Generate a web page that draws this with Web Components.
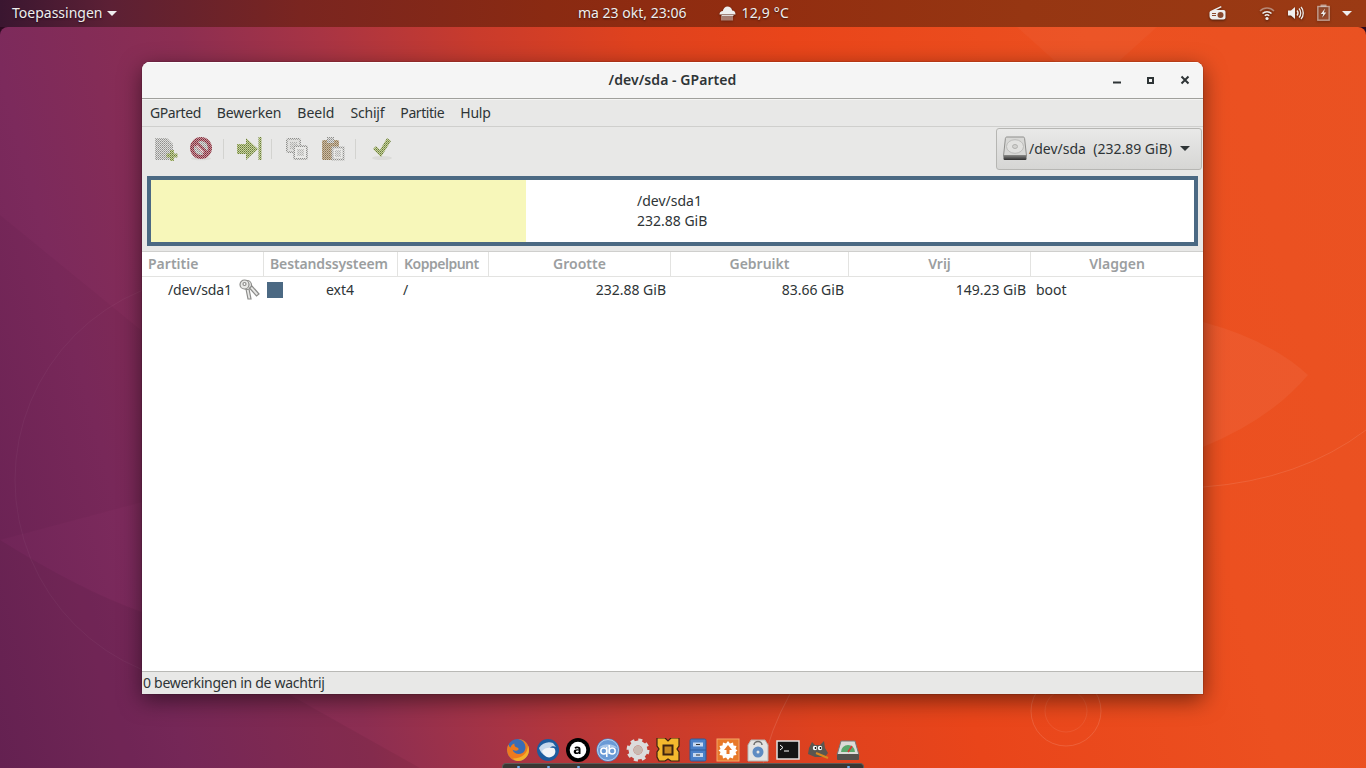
<!DOCTYPE html>
<html><head><meta charset="utf-8"><style>
html,body{margin:0;padding:0;width:1366px;height:768px;overflow:hidden;background:#000;font-family:"Noto Sans",sans-serif}
</style></head><body>
<gnome-desktop>
  <top-panel slot="panel"></top-panel>
  <gparted-window slot="window"></gparted-window>
  <app-dock slot="dock"></app-dock>
</gnome-desktop>
<script>
const F='"Noto Sans","Open Sans",sans-serif';
function def(name,html){customElements.define(name,class extends HTMLElement{constructor(){super();this.attachShadow({mode:'open'}).innerHTML=html;}})}

def('gnome-desktop',`<style>
:host{display:flex;flex-direction:column;width:1366px;height:768px;position:relative;overflow:hidden;background:#2c0a20;font-family:${F}}
.wall{flex:1;position:relative;border-radius:8px 8px 0 0;overflow:hidden;background:linear-gradient(75deg,#6a2356 0%,#7c2a5c 12%,#8c2e52 24%,#a83444 33%,#c93b2c 43%,#df421e 53%,#e9451a 63%,#ec5020 82%,#ea5222 100%);display:flex;flex-direction:column;align-items:flex-start}
.deco{position:absolute;left:0;top:0;width:1366px;height:741px;pointer-events:none}
.win{margin:35px 0 0 142px;width:1061px;height:632px;position:relative}
.dock{position:absolute;left:500px;top:711px}
</style>
<slot name="panel"></slot>
<div class="wall">
<svg class="deco" viewBox="0 27 1366 741" fill="none">
<path d="M0 215 L300 460 L0 540Z" fill="#000" opacity=".03"/>
<path d="M0 540 Q80 590 142 612 L420 768 H0Z" fill="#000" opacity=".05"/>
<path d="M1203 322 Q1270 340 1308 375 Q1270 420 1203 447Z" fill="#fff" opacity=".05"/>
<path d="M1017 27 L1087 90 L1157 27Z" fill="#fff" opacity=".03"/>
<circle cx="1066" cy="711" r="35" stroke="#fff" stroke-opacity=".13"/>
<circle cx="1066" cy="711" r="21" stroke="#fff" stroke-opacity=".08"/>
<circle cx="220" cy="480" r="205" stroke="#fff" stroke-opacity=".04"/>
<path d="M1203 487 Q1300 480 1366 430" stroke="#fff" stroke-opacity=".1"/>
<path d="M790 694 Q770 730 762 768" stroke="#fff" stroke-opacity=".12"/>
</svg>
<div class="win"><slot name="window"></slot></div>
<div class="dock"><slot name="dock"></slot></div>
</div>`);

def('top-panel',`<style>
:host{display:flex;height:27px;box-sizing:border-box;padding-bottom:2px;align-items:center;flex:none;color:#eee;font-size:14px;background:linear-gradient(90deg,#3a1630 0%,#5c2035 8%,#7a2520 22%,#8a2a12 40%,#922d10 55%,#963612 75%,#9b3a14 100%);text-shadow:0 1px 2px rgba(0,0,0,.6)}
.left{padding-left:12px;display:flex;align-items:center;gap:5px;width:566px;flex:none}
.tri{width:0;height:0;border-left:5px solid transparent;border-right:5px solid transparent;border-top:5px solid #eee;margin-top:1px}
.center{display:flex;align-items:center;gap:33px}
.wx{display:flex;align-items:center;gap:5px;letter-spacing:.2px}
.right{display:flex;align-items:center;margin-left:auto;padding-right:14px}
svg{display:block;filter:drop-shadow(0 1px 1px rgba(0,0,0,.5))}
</style>
<div class="left"><span>Toepassingen</span><span class="tri"></span></div>
<div class="center"><span>ma 23 okt, 23:06</span><span class="wx">
<svg width="17" height="17" viewBox="0 0 17 17" fill="#eee"><path d="M.5 10.500c0-2.200 1.500-3.500 3.300-3.500C4.300 4.500 6.300 2.500 8.500 2.500s4.200 1.500 4.700 4c2 0 3.300 1.500 3.300 4H.5z"/><path d="M2.500 11.500h12M3 12v4.500M5 12v4.500M7 12v4.500M9 12v4.500M11 12v4.500M13 12v4.500" stroke="#eee" stroke-width=".9" fill="none"/></svg>
<span>12,9 °C</span></span></div>
<div class="right">
<svg width="17" height="16" viewBox="0 0 17 16" style="margin-right:33px"><path d="M1.500 6 12 1l.6 1.200L7 5h7.500c1.200 0 2 .8 2 2v5.500c0 1.200-.8 2-2 2h-11c-1.500 0-3-1.500-3-3.500V8c0-1 .5-1.600 1-2z" fill="#eee"/><circle cx="11.500" cy="10" r="3" fill="#8a4a30"/><path d="M3 8.500h4M3 10.500h4" stroke="#8a4a30"/></svg>
<svg width="16" height="16" viewBox="0 0 16 16" fill="none" stroke="#eee" style="margin-right:12px"><path d="M1 6c4-4 10-4 14 0" stroke-opacity=".45" stroke-width="1.500"/><path d="M3.500 8.500c2.500-2.500 6.500-2.500 9 0" stroke-width="1.500"/><path d="M5.800 10.800c1.200-1.200 3.200-1.200 4.400 0" stroke-width="1.500"/><circle cx="8" cy="13.500" r="1.600" fill="#eee" stroke="none"/></svg>
<svg width="17" height="16" viewBox="0 0 17 16" fill="none" stroke="#eee" style="margin-right:13px"><path d="M1 5.500h3L8 2v12l-4-3.500H1z" fill="#eee" stroke="none"/><path d="M10 5.500c1.300 1.500 1.300 3.500 0 5M12 3.500c2.300 2.500 2.300 6.500 0 9M14 2c3 3 3 9 0 12" stroke-width="1.300"/></svg>
<svg width="13" height="17" viewBox="0 0 13 17" style="margin-right:12px"><rect x=".8" y="2.500" width="11.400" height="13.700" fill="#eee" fill-opacity=".12" stroke="#eee" stroke-opacity=".55" stroke-width="1.400"/><rect x="3.500" y=".5" width="6" height="2.200" fill="#eee" fill-opacity=".55"/><path d="M8 4.500 3.800 10h2.400l-1 3.800 4-5.300H6.800z" fill="#eee"/></svg>
<span class="tri"></span>
</div>`);

const pat=(id,a,b,c)=>`<pattern id="${id}" width="2" height="2" patternUnits="userSpaceOnUse"><rect width="2" height="2" fill="${a}"/><rect width="1" height="1" fill="${b}"/><rect x="1" y="1" width="1" height="1" fill="${c}"/></pattern>`;
def('gparted-window',`<style>
:host{display:flex;flex-direction:column;width:1061px;height:632px;background:#fff;border-radius:8px 8px 0 0;box-shadow:0 6px 22px rgba(0,0,0,.5),0 0 0 1px rgba(0,0,0,.1);color:#2e3436;font-size:14px;overflow:hidden}
.title{height:37px;box-sizing:border-box;padding-bottom:2px;flex:none;background:#f5f5f5;display:flex;align-items:center;justify-content:center;font-weight:600;letter-spacing:.06px;color:#2e3436;border-bottom:1px solid #a0a09c;box-shadow:inset 0 1px 0 #fff;position:relative}
.wc{position:absolute;right:0;top:0;height:36px}
.wc svg{display:block}
.menu{height:28px;box-sizing:border-box;padding:0 0 1px 8px;flex:none;background:#e8e8e7;display:flex;align-items:center;border-bottom:1px solid #cfcfcd;gap:16px;box-shadow:inset 0 1px 0 #f4f4f3}
.tools{height:44px;flex:none;background:#e8e8e7;display:flex;align-items:center;padding:0 1px 0 6px}
.spacer{flex:1}
.sep{width:1px;height:20px;background:#d3d3d0;margin:0 7px 0 5px}
.tb{width:35px;height:28px;display:flex;align-items:center;justify-content:center}
.tb svg{display:block}
.combo{width:206px;height:42px;box-sizing:border-box;border:1px solid #b6b6b3;border-radius:3px;background:linear-gradient(#e9e9e8,#d6d6d4);display:flex;align-items:center;padding:0 0 2px 5px;gap:1px}
.combo .t{flex:1;white-space:pre}
.combo .tri{width:0;height:0;border-left:5px solid transparent;border-right:5px solid transparent;border-top:5px solid #2e3436;margin-right:11px}
.graph{height:80px;flex:none;background:#e8e8e7;padding:5px;box-sizing:border-box}
.outer{height:70px;box-sizing:border-box;border:4px solid #4b6983;background:#fff;display:flex}
.yellow{width:375px;background:#f7f7ba}
.glabel{padding:11px 0 0 111px;line-height:20px}
list-view{flex:1;min-height:0}
.status{height:23px;box-sizing:border-box;padding:0 0 2px 1px;letter-spacing:-.28px;flex:none;background:#e8e8e7;border-top:1px solid #b9b9b6;display:flex;align-items:center}
</style>
<div class="title">/dev/sda - GParted
<div class="wc">
<svg width="96" height="36" viewBox="0 0 96 36" fill="none" stroke="#2e3436" stroke-width="2"><path d="M6 20.500h8"/><rect x="41" y="16" width="5" height="5"/><path d="M74.500 14.500l7 7M81.500 14.500l-7 7"/></svg>
</div></div>
<div class="menu"><span style="letter-spacing:-.43px">GParted</span><span style="letter-spacing:-.12px">Bewerken</span><span>Beeld</span><span style="letter-spacing:-.2px">Schijf</span><span style="letter-spacing:-.43px">Partitie</span><span style="letter-spacing:-.25px">Hulp</span></div>
<div class="tools">
<span class="tb"><svg width="24" height="24" viewBox="0 0 24 24"><defs>${pat('d','#dfdfdd','#8e8e8c','#a8a8a6')}${pat('g','#c9d2a0','#667a3c','#8c9e5a')}${pat('r','#c49aa0','#7d2634','#993c4a')}${pat('b','#cbbda6','#8a7352','#a28a68')}</defs><path d="M1 1h12l6 6v16H1z" fill="url(#d)"/><path d="M16 13h4v3.500h3.500v4H20V24h-4v-3.500h-3.500v-4H16z" fill="url(#g)"/></svg></span>
<span class="tb"><svg width="24" height="24" viewBox="0 0 24 24"><ellipse cx="12" cy="21.500" rx="10" ry="1.800" fill="#dbdbd9"/><circle cx="12" cy="11" r="9" fill="url(#d)" stroke="url(#r)" stroke-width="4"/><path d="M5.500 5l13 12.500" stroke="url(#r)" stroke-width="5"/><path d="M7.500 8.500l7 7" stroke="#f0e8e8" stroke-width="1.200"/></svg></span>
<span class="sep"></span>
<span class="tb"><svg width="26" height="24" viewBox="0 0 26 24"><path d="M1 7h9V1l12 11-12 11v-6H1z" fill="url(#g)"/><rect x="22.500" y="0" width="3" height="23" fill="url(#g)"/></svg></span>
<span class="sep"></span>
<span class="tb"><svg width="22" height="22" viewBox="0 0 22 22"><rect x="1" y="1" width="13" height="13" rx="1.500" fill="#dfdfdd" stroke="url(#d)" stroke-width="2"/><rect x="4" y="4" width="7" height="7" fill="url(#d)" opacity=".6"/><rect x="8" y="8" width="13" height="13" rx="1.500" fill="#e9e9e7" stroke="url(#d)" stroke-width="2"/><rect x="11" y="11" width="7" height="7" fill="url(#d)" opacity=".6"/></svg></span>
<span class="tb" style="padding-left:3px;box-sizing:border-box"><svg width="24" height="24" viewBox="0 0 24 24"><rect x="1" y="3" width="17" height="20" rx="1.500" fill="url(#b)"/><rect x="6" y="0" width="7" height="6" fill="url(#d)"/><rect x="11.500" y="10.500" width="11" height="12" fill="#e9e9e7" stroke="url(#d)" stroke-width="2"/><rect x="14" y="13" width="6" height="7" fill="url(#d)" opacity=".6"/></svg></span>
<span class="sep" style="margin-left:6px;margin-right:8px"></span>
<span class="tb"><svg width="24" height="24" viewBox="0 0 24 24"><ellipse cx="12" cy="21" rx="10" ry="2" fill="#dbdbd9"/><path d="M3 12l3-3 4 4L17 1l4 3-10 16z" fill="url(#g)"/></svg></span>
<span class="spacer"></span>
<div class="combo"><svg width="26" height="26" viewBox="0 0 26 26"><defs><linearGradient id="hd" x1="0" y1="0" x2="0" y2="1"><stop offset="0" stop-color="#8a8a88"/><stop offset="1" stop-color="#2e2e2e"/></linearGradient></defs><path d="M5 2h16c1 0 1.500.5 1.600 1.500L24.500 21H1.500L3.400 3.500C3.500 2.500 4 2 5 2z" fill="#d8d8d6" stroke="#8f8f8d"/><rect x="1.500" y="20" width="23" height="5" rx="1.200" fill="url(#hd)"/><ellipse cx="13" cy="11.500" rx="8.500" ry="6.800" fill="#e2e2e0" stroke="#bcbcba"/><ellipse cx="13" cy="11.500" rx="2.500" ry="2" fill="#d2d2d0" stroke="#b0b0ae"/></svg><span class="t">/dev/sda  (232.89 GiB)</span><span class="tri"></span></div>
</div>
<div class="graph"><div class="outer"><div class="yellow"></div><div class="glabel">/dev/sda1<br>232.88 GiB</div></div></div>
<list-view></list-view>
<div class="status">0 bewerkingen in de wachtrij</div>`);

def('list-view',`<style>
:host{display:block;background:#fff;border-top:1px solid #cfcfcd}
.row{display:grid;grid-template-columns:122px 134px 91px 182px 178px 182px 1fr;width:100%}
.head{height:25px;box-sizing:border-box;border-bottom:1px solid #e3e3e1;color:#9b9e9f;font-weight:600}
.head span{display:flex;align-items:center;padding:0 0 2px 6px;border-right:1px solid #e3e3e1;box-sizing:border-box}
.head .c{justify-content:center;padding:0 0 2px}
.head span:last-child{border-right:0}
.body{height:27px;align-items:center}
.body>span{box-sizing:border-box;display:flex;align-items:center;height:27px;padding-bottom:2px}
.r{justify-content:flex-end;padding-right:5px}
svg{display:block}
</style>
<div class="row head"><span>Partitie</span><span style="letter-spacing:-.13px">Bestandssysteem</span><span style="letter-spacing:-.5px">Koppelpunt</span><span class="c">Grootte</span><span class="c">Gebruikt</span><span class="c">Vrij</span><span class="c">Vlaggen</span></div>
<div class="row body">
<span style="padding-left:26px;gap:6px;letter-spacing:-.1px">/dev/sda1<svg width="22" height="21" viewBox="0 0 22 21" fill="#e8e8e6" stroke="#8c8c8a" stroke-width="1.200"><path d="M8 10l2 10h3l-2-10z"/><circle cx="9" cy="6" r="4.500" fill="#e8e8e6"/><path d="M11.500 9l7 8 2.500-2-7-8z"/><circle cx="6.500" cy="5.500" r="4.500"/><circle cx="6.500" cy="5" r="1.500" fill="#fff"/></svg></span>
<span style="padding-left:3px"><i style="width:16px;height:16px;background:#4b6983;display:block"></i><span style="margin-left:43px">ext4</span></span>
<span style="padding-left:5px">/</span>
<span class="r">232.88 GiB</span><span class="r">83.66 GiB</span><span class="r">149.23 GiB</span>
<span style="padding-left:5px">boot</span>
</div>`);

const ic=(s)=>`<svg width="24" height="24" viewBox="0 0 24 24">${s}</svg>`;
def('app-dock',`<style>
:host{display:block;width:366px;height:30px;position:relative}
.icons{display:flex;gap:6px;padding-left:6px}
.icons svg{display:block}
.bar{position:absolute;left:2px;top:25px;width:362px;height:8px;background:#3a3633;border:1px solid #5e5a56;border-bottom:0;border-radius:4px 4px 0 0;box-sizing:border-box;display:flex}
.dot{position:absolute;top:2px;width:3px;height:2px;background:#6fb0ee;border-radius:1px}
</style>
<div class="icons">
${ic('<circle cx="12" cy="12" r="11" fill="#3a6db5"/><path d="M12 1c7 0 11 5.500 11 11s-5 11-11 11S1 18 1 12c0-2 .5-4 1.500-5.500C3 8 3.500 9 4.500 9.500 5 7 7 6 8.500 5.500 8 7.500 9 9 11 9.500c2 .5 2 2.500 0 3-2 .5-3.500 0-4.500-1 1 4 6 6 10 3.500s3.500-8 1-11C16 2 14 1.500 12 1z" fill="#ee7a1e"/><path d="M12 23c6 0 11-5 11-11 0-2-.5-3.500-1-4.500-.5 8-6 13-15 13 1 1.500 3 2.500 5 2.500z" fill="#f4b02c"/>')}
${ic('<circle cx="12" cy="12" r="11" fill="#1d5c9e"/><path d="M3 10c3-5 9-7 14-5l3 4c-2-1-5-1-6 1-1 1.500 0 3 2 3.500-3 1-5 0-6-2 0 3 2 5 5 5.500-4 2-9 1-12-7z" fill="#c5d8ec"/><path d="M6 13c2-3 6-4 12-3 2 2 2 6-1 8-4 3-9 1-11-5z" fill="#f2f4f7"/>')}
${ic('<circle cx="12" cy="12" r="12" fill="#000"/><circle cx="12" cy="12" r="8.300" fill="#fff"/><path d="M8.500 9.500c1.500-1.500 6-1.500 6 1.500v5h-1.800v-.8c-1.500 1.400-5 1.200-5-1.400 0-2.400 3-2.800 5-2.300 0-1.500-2-1.500-3.500-.7zM10 13.700c0 1.200 2.300 1 2.700-.2v-.8c-1.200-.3-2.700 0-2.700 1z" fill="#000"/>')}
${ic('<circle cx="12" cy="12" r="11.500" fill="#4f84c8"/><circle cx="12" cy="12" r="10.500" fill="#6a9ad6" stroke="#b8d0ee"/><path d="M3 10c3-5 15-5 18 0-4-1.500-14-1.500-18 0z" fill="#a8c6ea"/><circle cx="7.800" cy="13" r="3" fill="none" stroke="#fff" stroke-width="1.500"/><path d="M10.800 9v10M13.200 7v9" stroke="#fff" stroke-width="1.500"/><circle cx="16.200" cy="13" r="3" fill="none" stroke="#fff" stroke-width="1.500"/>')}
${ic('<circle cx="12" cy="12" r="7" fill="none" stroke="#dcdcdc" stroke-width="5"/><circle cx="12" cy="12" r="10" fill="none" stroke="#dcdcdc" stroke-width="3" stroke-dasharray="4 3.850"/><circle cx="12" cy="12" r="4.500" fill="#c9b8b0"/>')}
${ic('<path d="M1 0h8l3 3 3-3h8v8l-2 3 2 3v9h-8l-3-2-3 2H3l-2-4v-5l2-3-2-3z" fill="#f4b92e" stroke="#3e2410" stroke-width="1.200"/><rect x="7.500" y="7.500" width="9" height="9" fill="#c98a20" stroke="#3e2410" stroke-width="2"/>')}
${ic('<rect x="4" y="1" width="16" height="22" rx="1.500" fill="#4a80c8" stroke="#2d5a9a"/><path d="M4 12h16" stroke="#2d5a9a"/><rect x="7" y="4.500" width="10" height="4" fill="#c6d8f0"/><rect x="7" y="15" width="10" height="4" fill="#c6d8f0"/><path d="M10 6.500h4M10 17h4" stroke="#333"/>')}
${ic('<rect x="1" y="1" width="22" height="22" fill="#e8792a" stroke="#f4a868"/><path d="M12 3l2 2.500 3-1 .5 3 3 .5-1 3 2 1.500-2 1.500 1 3-3 .5-.5 3-3-1-2 2.500-2-2.500-3 1-.5-3-3-.5 1-3-2-1.500 2-1.500-1-3 3-.5.5-3 3 1z" fill="#fff"/><path d="M12 7l4 5h-2.500v4h-3v-4H8z" fill="#e8792a"/>')}
${ic('<path d="M5 2h14l3 5v16H2V7z" fill="#e4e4e2" stroke="#b5b5b3"/><path d="M8 7a4 3.500 0 0 1 8 0" fill="none" stroke="#6e6e6c" stroke-width="1.500"/><circle cx="12" cy="14" r="5.500" fill="#5f8cc2"/><circle cx="12" cy="14" r="1.500" fill="#e4e4e2"/>')}
${ic('<rect x="1" y="3" width="22" height="18" fill="#141414" stroke="#e2e2e2" stroke-width="1.500"/><path d="M4 7l3 2.500L4 12" stroke="#fff" fill="none"/><path d="M8 13h5" stroke="#fff"/>')}
${ic('<path d="M3 10l3-6 3 3h5l4-4 1 7 3 5-3 4H9l-7-3z" fill="#5a5650"/><circle cx="9" cy="10" r="2.200" fill="#fff"/><circle cx="14" cy="10" r="2.200" fill="#fff"/><circle cx="9.500" cy="10" r=".9" fill="#000"/><circle cx="14.500" cy="10" r=".9" fill="#000"/><path d="M10 15l12 5" stroke="#d98a20" stroke-width="2"/>')}
${ic('<path d="M5 3h14l4 14H1z" fill="#dcdcd8" stroke="#777"/><rect x="1" y="16" width="22" height="6" rx="1" fill="#55524e"/><path d="M5 14a7 7 0 0 1 14 0z" fill="#5aa86a"/><path d="M12 14l4-6" stroke="#d33" stroke-width="1.500"/>')}
</div><div class="bar"><i class="dot" style="left:14px"></i><i class="dot" style="left:44px"></i><i class="dot" style="left:74px"></i><i class="dot" style="left:344px"></i></div>`);
</script>
</body></html>
